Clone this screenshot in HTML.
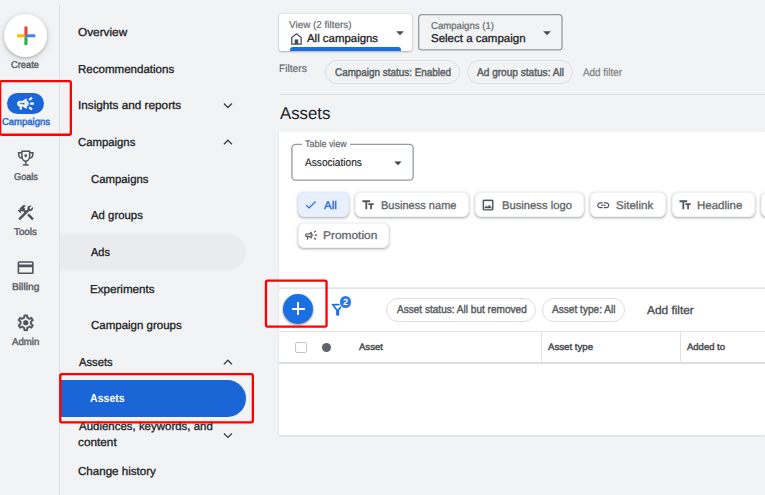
<!DOCTYPE html>
<html>
<head>
<meta charset="utf-8">
<style>
*{box-sizing:border-box;margin:0;padding:0}
html,body{width:765px;height:495px;overflow:hidden;background:#f1f3f4;font-family:"Liberation Sans",sans-serif;color:#202124}
#root{position:relative;width:765px;height:495px;overflow:hidden;background:#f1f3f4}
.a{position:absolute}
.t{position:absolute;white-space:nowrap;line-height:1;text-rendering:geometricPrecision;transform-origin:0 0}
.chip{position:absolute;border:1px solid #dcdee1;border-radius:12px}
.achip{position:absolute;border:1px solid #f2f3f5;border-radius:6px;background:#fff;box-shadow:0 1px 2px rgba(60,64,67,.30),0 1px 3px .5px rgba(60,64,67,.13)}
.red{position:absolute;border:2.2px solid #f2101a;border-radius:2.5px}
svg{position:absolute;overflow:visible}
</style>
</head>
<body>
<div id="root">

<!-- left rail divider -->
<div class="a" style="left:59px;top:5px;width:1px;height:490px;background:#dcdee1"></div>

<!-- Create button -->
<div class="a" style="left:4.2px;top:14.3px;width:42.8px;height:42.5px;border-radius:50%;background:#fff;box-shadow:0 1px 3px rgba(60,64,67,.30),0 2px 6px 1px rgba(60,64,67,.13)"></div>
<svg style="left:15.8px;top:25.8px" width="20" height="20" viewBox="0 0 20 20">
<rect x="8.4" y="0.5" width="3.1" height="10.8" fill="#ea4335"/>
<rect x="8.4" y="11.3" width="3.1" height="7.7" fill="#34a853"/>
<rect x="1" y="8.2" width="7.4" height="3.1" fill="#fbbc04"/>
<path d="M11.5 8.200H19.400V11.300H8.400Z" fill="#4285f4"/>
</svg>

<!-- Campaigns pill + icon -->
<div class="a" style="left:7.2px;top:92.9px;width:37px;height:21.1px;border-radius:11px;background:#1a66d6"></div>
<svg style="left:16.3px;top:93.5px" width="19.2" height="19.2" viewBox="0 0 24 24" fill="#fff" stroke="#fff" stroke-width=".85"><path d="M18 11v2h4v-2h-4zm-2 6.61c.96.71 2.21 1.65 3.2 2.39.4-.53.8-1.07 1.2-1.6-.99-.74-2.24-1.68-3.2-2.4-.4.54-.8 1.08-1.2 1.61zM20.4 5.6c-.4-.53-.8-1.07-1.2-1.6-.99.74-2.24 1.68-3.2 2.4.4.53.8 1.07 1.2 1.6.96-.72 2.21-1.65 3.2-2.4zM4 9c-1.1 0-2 .9-2 2v2c0 1.1.9 2 2 2h1v4h2v-4h1l5 3V6L8 9H4zm5.03 1.71L11 9.53v4.94l-1.97-1.18-.48-.29H4v-2h4.55l.48-.29zM15.5 12c0-1.33-.58-2.53-1.5-3.35v6.69c.92-.81 1.5-2.01 1.5-3.34z"/></svg>

<!-- Goals trophy -->
<svg style="left:0;top:0" width="765" height="495" fill="none" stroke="#4e5257" stroke-width="1.45">
<path d="M21.85 151.3H29.65V155.6C29.65 158.9 27.9 161.2 25.75 161.2C23.6 161.2 21.85 158.9 21.85 155.6Z"/>
<path d="M21.8 152.7H18.6V153.9C18.6 156.2 20 157.8 22.3 158.2"/>
<path d="M29.7 152.7H32.9V153.9C32.9 156.2 31.5 157.8 29.2 158.2"/>
<path d="M25.75 161.2V164.6"/>
<path d="M22.9 164.95H28.6" stroke-width="1.5"/>
<circle cx="25.75" cy="155.7" r="1.35" fill="#4e5257" stroke="none"/>
</svg>

<!-- Tools -->
<svg style="left:15.7px;top:203px" width="19.5" height="19.5" viewBox="0 0 24 24" fill="#50545a"><rect height="8.48" transform="matrix(0.7071 -0.7071 0.7071 0.7071 -6.8717 17.6255)" width="3" x="16.34" y="12.87"/><path d="M17.5,10c1.930,0,3.500-1.570,3.500-3.500c0-0.580-0.160-1.120-0.410-1.600l-2.700,2.700L16.400,6.110l2.700-2.700C18.620,3.160,18.080,3,17.500,3 C15.570,3,14,4.570,14,6.500c0,0.410,0.080,0.800,0.210,1.160l-1.850,1.850l-1.780-1.780l0.710-0.710L9.880,5.610L12,3.490 c-1.170-1.170-3.070-1.170-4.240,0L4.220,7.030l1.410,1.410H2.810L2.100,9.150l3.540,3.540l0.710-0.710V9.150l1.410,1.410l0.710-0.710l1.780,1.780 l-7.410,7.410l2.120,2.120L16.340,9.790C16.700,9.920,17.090,10,17.500,10z"/></svg>

<!-- Billing card -->
<svg style="left:16.2px;top:258.3px" width="19.3" height="19.3" viewBox="0 0 24 24" fill="#50545a"><path d="M20 4H4c-1.110 0-1.990.89-1.990 2L2 18c0 1.110.89 2 2 2h16c1.110 0 2-.89 2-2V6c0-1.110-.89-2-2-2zm0 14H4v-6.500h16v6.500zm0-10H4V6h16v2z"/></svg>

<!-- Admin gear -->
<svg style="left:16.1px;top:313.1px" width="19.5" height="19.5" viewBox="0 0 24 24" fill="#50545a" stroke="#50545a" stroke-width=".35"><path d="M19.430 12.980c.04-.32.07-.64.07-.98 0-.34-.03-.66-.07-.98l2.110-1.650c.19-.15.24-.42.12-.64l-2-3.460c-.09-.16-.26-.25-.44-.25-.06 0-.12.010-.17.030l-2.490 1c-.52-.4-1.080-.73-1.690-.98l-.38-2.650C14.460 2.180 14.250 2 14 2h-4c-.25 0-.46.18-.49.42l-.38 2.650c-.61.25-1.170.59-1.690.98l-2.490-1c-.06-.02-.12-.03-.18-.03-.17 0-.34.09-.43.25l-2 3.460c-.13.22-.07.49.12.64l2.110 1.650c-.04.32-.07.65-.07.98 0 .33.03.66.07.98l-2.110 1.650c-.19.15-.24.42-.12.640l2 3.460c.09.16.26.25.44.25.06 0 .12-.010.17-.03l2.490-1c.52.4 1.080.73 1.690.98l.38 2.650c.03.24.24.42.49.42h4c.25 0 .46-.18.49-.42l.38-2.650c.61-.25 1.170-.59 1.690-.98l2.490 1c.06.02.12.03.18.03.17 0 .34-.09.43-.25l2-3.460c.12-.22.07-.49-.12-.64l-2.110-1.650zm-1.980-1.710c.04.31.05.52.05.73 0 .21-.02.43-.05.73l-.14 1.130.89.7 1.080.84-.7 1.210-1.270-.51-1.040-.42-.9.68c-.43.32-.84.56-1.250.73l-1.060.43-.16 1.130-.2 1.350h-1.400l-.19-1.350-.16-1.130-1.060-.43c-.43-.18-.83-.41-1.230-.71l-.91-.7-1.060.43-1.270.51-.7-1.210 1.080-.84.89-.7-.14-1.130c-.03-.31-.05-.54-.05-.74s.02-.43.05-.73l.14-1.130-.89-.7-1.080-.84.7-1.210 1.270.51 1.040.42.9-.68c.43-.32.84-.56 1.250-.73l1.060-.43.16-1.130.2-1.350h1.390l.19 1.350.16 1.130 1.060.43c.43.18.83.41 1.230.71l.91.7 1.060-.43 1.270-.51.7 1.210-1.070.85-.89.7.14 1.130z"/><circle cx="12" cy="12" r="3.1"/></svg>

<!-- nav highlight backgrounds -->
<div class="a" style="left:60px;top:233.5px;width:185.8px;height:36.7px;border-radius:0 18.4px 18.4px 0;background:#e9ebee"></div>
<div class="a" style="left:60px;top:380.2px;width:186px;height:36.8px;border-radius:0 18.4px 18.4px 0;background:#1a66d6"></div>

<!-- nav chevrons -->
<svg style="left:0;top:0" width="765" height="495" fill="none" stroke="#3c4043" stroke-width="1.35">
<polyline points="223.9,103.5 227.9,107.5 231.9,103.5"/>
<polyline points="223.9,144.2 227.9,140.2 231.9,144.2"/>
<polyline points="223.9,364.2 227.9,360.2 231.9,364.2"/>
<polyline points="223.9,433.4 227.9,437.4 231.9,433.4"/>
</svg>

<!-- top selector 1 -->
<div class="a" style="left:279.4px;top:13.8px;width:133px;height:36.8px;border-radius:3px;background:#fff;box-shadow:0 1px 2px rgba(60,64,67,.32),0 0 2px rgba(60,64,67,.22)"></div>
<div class="a" style="left:290.3px;top:47.2px;width:111.2px;height:3.4px;border-radius:3px 3px 0 0;background:#1a6ee0"></div>
<svg style="left:0;top:0" width="765" height="495"><path d="M291.75 44.05V37.55L296.45 33.75L301.15 37.55V44.05Z" fill="none" stroke="#494d52" stroke-width="1.25" stroke-linejoin="miter"/><rect x="294.7" y="39.4" width="3.5" height="4.6" fill="#494d52"/></svg>
<svg style="left:392.1px;top:24.6px" width="16" height="16" viewBox="0 0 24 24" fill="#4a4e53"><path d="M6.200 9.500l5.800 6 5.800-6z"/></svg>

<!-- top selector 2 -->

<svg style="left:538.5px;top:24.6px" width="16" height="16" viewBox="0 0 24 24" fill="#4a4e53"><path d="M6.200 9.500l5.800 6 5.800-6z"/></svg>

<!-- filter chips -->
<div class="chip" style="left:325.4px;top:60.4px;width:134.8px;height:23.7px"></div>
<div class="chip" style="left:466.9px;top:60.4px;width:106.6px;height:23.7px"></div>
<div class="a" style="left:280px;top:93.9px;width:485px;height:1px;background:#dcdee1"></div>

<!-- white card -->
<div class="a" style="left:279.4px;top:131.8px;width:486px;height:303.5px;background:#fff;box-shadow:0 1px 2px rgba(60,64,67,.15)"></div>

<!-- Table view -->
<svg style="left:0;top:0" width="765" height="495"><rect x="418.65" y="14.65" width="143.4" height="35.3" rx="3.2" fill="none" stroke="#959ba1" stroke-width="1.3"/><rect x="291.95" y="144.45" width="121.2" height="35.7" rx="3.6" fill="none" stroke="#959ba1" stroke-width="1.3"/></svg>
<div class="a" style="left:302.2px;top:143px;width:48px;height:3.5px;background:#fff"></div>
<svg style="left:390.1px;top:154.8px" width="16" height="16" viewBox="0 0 24 24" fill="#3c4043"><path d="M6.600 9.600l5.400 5.600 5.400-5.600z"/></svg>

<!-- asset chips -->
<div class="achip" style="left:297.6px;top:192.3px;width:51.6px;height:24.8px;background:#e8f0fe;border-color:#e3ecfd"></div>
<svg style="left:304.2px;top:198.1px" width="13.6" height="13.6" viewBox="0 0 24 24" fill="#1a6ee0" stroke="#1a6ee0" stroke-width=".3"><path d="M9 16.170L4.830 12l-1.420 1.410L9 19 21 7l-1.410-1.410z"/></svg>

<div class="achip" style="left:354.7px;top:192.3px;width:114.6px;height:24.8px"></div>
<svg style="left:360.9px;top:198px" width="14.2" height="14.2" viewBox="0 0 24 24" fill="#50545a"><path d="M2.500 4v3h5v12h3V7h5V4h-13zm19 5h-9v3h3v7h3v-7h3V9z"/></svg>

<div class="achip" style="left:474.9px;top:192.3px;width:109.2px;height:24.8px"></div>
<svg style="left:481.3px;top:197.8px" width="14.1" height="14.1" viewBox="0 0 24 24" fill="#50545a" stroke="#50545a" stroke-width=".5"><path d="M19 5v14H5V5h14m0-2H5c-1.100 0-2 .9-2 2v14c0 1.100.9 2 2 2h14c1.100 0 2-.9 2-2V5c0-1.100-.9-2-2-2zm-4.860 8.860l-3 3.870L9 13.140 6 17h12l-3.860-5.140z"/></svg>

<div class="achip" style="left:589.6px;top:192.3px;width:76.3px;height:24.8px"></div>
<svg style="left:595.8px;top:197.6px" width="14.5" height="14.5" viewBox="0 0 24 24" fill="#50545a"><path d="M3.900 12c0-1.710 1.390-3.100 3.100-3.100h4V7H7c-2.760 0-5 2.240-5 5s2.240 5 5 5h4v-1.900H7c-1.710 0-3.100-1.390-3.100-3.100zM8 13h8v-2H8v2zm9-6h-4v1.900h4c1.710 0 3.100 1.390 3.100 3.100s-1.390 3.100-3.100 3.100h-4V17h4c2.760 0 5-2.240 5-5s-2.240-5-5-5z"/></svg>

<div class="achip" style="left:671.5px;top:192.3px;width:83.5px;height:24.8px"></div>
<svg style="left:677.8px;top:198px" width="14.2" height="14.2" viewBox="0 0 24 24" fill="#50545a"><path d="M2.500 4v3h5v12h3V7h5V4h-13zm19 5h-9v3h3v7h3v-7h3V9z"/></svg>

<div class="achip" style="left:760.9px;top:192.3px;width:40px;height:24.8px"></div>

<div class="achip" style="left:297.6px;top:223px;width:91.6px;height:24.8px"></div>
<svg style="left:303.7px;top:228.3px" width="14.4" height="14.4" viewBox="0 0 24 24" fill="#50545a"><path d="M18 11v2h4v-2h-4zm-2 6.610c.96.71 2.210 1.650 3.200 2.390.4-.53.8-1.070 1.200-1.600-.99-.74-2.240-1.680-3.200-2.400-.4.54-.8 1.080-1.200 1.610zM20.400 5.600c-.4-.53-.8-1.070-1.200-1.600-.99.74-2.240 1.680-3.200 2.400.4.53.8 1.070 1.200 1.600.96-.72 2.210-1.650 3.200-2.400zM4 9c-1.100 0-2 .9-2 2v2c0 1.100.9 2 2 2h1v4h2v-4h1l5 3V6L8 9H4zm5.030 1.710L11 9.530v4.940l-1.970-1.180-.48-.29H4v-2h4.550l.48-.29zM15.500 12c0-1.330-.58-2.530-1.500-3.350v6.690c.92-.81 1.500-2.010 1.500-3.340z"/></svg>

<!-- toolbar lines -->
<div class="a" style="left:279.4px;top:287px;width:486px;height:2px;background:linear-gradient(#eceef0,#dee0e4)"></div>
<div class="a" style="left:279.4px;top:331px;width:486px;height:1px;background:#e0e2e5"></div>
<div class="a" style="left:279.4px;top:362.3px;width:486px;height:1.6px;background:#dcdee2"></div>
<div class="a" style="left:541px;top:332px;width:1px;height:30.5px;background:#e0e2e5"></div>
<div class="a" style="left:680.2px;top:332px;width:1px;height:30.5px;background:#e0e2e5"></div>

<!-- plus FAB -->
<div class="a" style="left:282.7px;top:293.6px;width:30.5px;height:30.5px;border-radius:50%;background:#1a6fe3;box-shadow:0 1px 3px rgba(60,64,67,.40),0 1px 2px rgba(60,64,67,.25)"></div>
<div class="a" style="left:291.5px;top:307.9px;width:13px;height:1.8px;background:#fff"></div>
<div class="a" style="left:297.1px;top:302.3px;width:1.8px;height:13px;background:#fff"></div>

<!-- filter funnel + badge -->
<svg style="left:328.9px;top:301.3px" width="17.3" height="17.3" viewBox="0 0 24 24" fill="#1a6ee0" stroke="#1a6ee0" stroke-width=".4"><path d="M7 6h10l-5.010 6.300L7 6zm-2.750-.39C6.270 8.200 10 13 10 13v6c0 .55.45 1 1 1h2c.55 0 1-.45 1-1v-6s3.720-4.800 5.740-7.390c.51-.66.04-1.610-.79-1.610H5.040c-.83 0-1.300.95-.79 1.610z"/></svg>
<div class="a" style="left:339px;top:295.5px;width:13px;height:13px;border-radius:50%;background:#fff"></div>
<div class="a" style="left:339.7px;top:296.2px;width:11.6px;height:11.6px;border-radius:50%;background:#2a79e6"></div>
<div class="t" style="left:339.7px;top:297.5px;width:11.6px;text-align:center;font-size:9px;font-weight:bold;color:#fff">2</div>

<!-- toolbar chips -->
<div class="chip" style="left:386.3px;top:298px;width:150px;height:23.6px;background:#fff"></div>
<div class="chip" style="left:542.3px;top:298px;width:82.9px;height:23.6px;background:#fff"></div>

<!-- header checkbox + dot -->
<div class="a" style="left:295.4px;top:342.1px;width:11.4px;height:11.2px;border:1.5px solid #c3c6cb;border-radius:2px;background:#fff"></div>
<div class="a" style="left:322px;top:343.1px;width:9.3px;height:9.3px;border-radius:50%;background:#5f6368"></div>

<div class="t" style="left:11.45px;top:61px;font-size:9.9px;color:#5f6368;transform:scaleX(0.9459);-webkit-text-stroke:.45px currentColor;">Create</div>
<div class="t" style="left:1.65px;top:118px;font-size:9.9px;color:#2467d0;transform:scaleX(0.9599);-webkit-text-stroke:.45px currentColor;">Campaigns</div>
<div class="t" style="left:13.71px;top:173px;font-size:9.9px;color:#5f6368;transform:scaleX(0.9277);-webkit-text-stroke:.45px currentColor;">Goals</div>
<div class="t" style="left:14.23px;top:228px;font-size:9.9px;color:#5f6368;transform:scaleX(0.9906);-webkit-text-stroke:.45px currentColor;">Tools</div>
<div class="t" style="left:11.89px;top:283px;font-size:9.9px;color:#5f6368;transform:scaleX(1.0377);-webkit-text-stroke:.45px currentColor;">Billing</div>
<div class="t" style="left:12.12px;top:338px;font-size:9.9px;color:#5f6368;transform:scaleX(0.9743);-webkit-text-stroke:.45px currentColor;">Admin</div>
<div class="t" style="left:78.24px;top:28px;font-size:11.5px;color:#202124;transform:scaleX(1.0259);-webkit-text-stroke:.3px currentColor;">Overview</div>
<div class="t" style="left:77.85px;top:65px;font-size:11.5px;color:#202124;transform:scaleX(1.0034);-webkit-text-stroke:.3px currentColor;">Recommendations</div>
<div class="t" style="left:78.08px;top:101px;font-size:11.5px;color:#202124;transform:scaleX(1.0216);-webkit-text-stroke:.3px currentColor;">Insights and reports</div>
<div class="t" style="left:78.21px;top:138px;font-size:11.5px;color:#202124;transform:scaleX(0.9857);-webkit-text-stroke:.3px currentColor;">Campaigns</div>
<div class="t" style="left:90.51px;top:175px;font-size:11.5px;color:#202124;transform:scaleX(0.9874);-webkit-text-stroke:.3px currentColor;">Campaigns</div>
<div class="t" style="left:91.05px;top:211px;font-size:11.5px;color:#202124;transform:scaleX(0.9899);-webkit-text-stroke:.3px currentColor;">Ad groups</div>
<div class="t" style="left:91.05px;top:248px;font-size:11.5px;color:#202124;transform:scaleX(0.9528);-webkit-text-stroke:.3px currentColor;">Ads</div>
<div class="t" style="left:90.14px;top:285px;font-size:11.5px;color:#202124;transform:scaleX(1.0094);-webkit-text-stroke:.3px currentColor;">Experiments</div>
<div class="t" style="left:90.50px;top:321px;font-size:11.5px;color:#202124;transform:scaleX(0.9997);-webkit-text-stroke:.3px currentColor;">Campaign groups</div>
<div class="t" style="left:78.75px;top:358px;font-size:11.5px;color:#202124;transform:scaleX(0.9762);-webkit-text-stroke:.3px currentColor;">Assets</div>
<div class="t" style="left:90.47px;top:394px;font-size:11.5px;color:#ffffff;transform:scaleX(0.9211);font-weight:bold;">Assets</div>
<div class="t" style="left:78.75px;top:422px;font-size:11.5px;color:#202124;transform:scaleX(0.9966);-webkit-text-stroke:.3px currentColor;">Audiences, keywords, and</div>
<div class="t" style="left:78.29px;top:438px;font-size:11.5px;color:#202124;transform:scaleX(1.0261);-webkit-text-stroke:.3px currentColor;">content</div>
<div class="t" style="left:78.20px;top:467px;font-size:11.5px;color:#202124;transform:scaleX(1.0065);-webkit-text-stroke:.3px currentColor;">Change history</div>
<div class="t" style="left:288.90px;top:21px;font-size:10px;color:#676b70;transform:scaleX(0.9907);-webkit-text-stroke:.2px currentColor;">View (2 filters)</div>
<div class="t" style="left:307.35px;top:34px;font-size:11.3px;color:#202124;transform:scaleX(1.0108);-webkit-text-stroke:.3px currentColor;">All campaigns</div>
<div class="t" style="left:430.82px;top:22px;font-size:10px;color:#676b70;transform:scaleX(0.9597);-webkit-text-stroke:.2px currentColor;">Campaigns (1)</div>
<div class="t" style="left:430.54px;top:34px;font-size:11.3px;color:#202124;transform:scaleX(1.0176);-webkit-text-stroke:.3px currentColor;">Select a campaign</div>
<div class="t" style="left:279.10px;top:64px;font-size:10.8px;color:#676b70;transform:scaleX(0.9433);-webkit-text-stroke:.2px currentColor;">Filters</div>
<div class="t" style="left:334.53px;top:68px;font-size:11.2px;color:#585c61;transform:scaleX(0.8833);-webkit-text-stroke:.44px currentColor;">Campaign status: Enabled</div>
<div class="t" style="left:476.72px;top:68px;font-size:11.2px;color:#585c61;transform:scaleX(0.9018);-webkit-text-stroke:.44px currentColor;">Ad group status: All</div>
<div class="t" style="left:583.00px;top:68px;font-size:11px;color:#7b8085;transform:scaleX(0.8995);-webkit-text-stroke:.2px currentColor;">Add filter</div>
<div class="t" style="left:280.00px;top:105px;font-size:17.2px;color:#202124;transform:scaleX(0.9769);">Assets</div>
<div class="t" style="left:305.21px;top:140px;font-size:9.6px;color:#676b70;transform:scaleX(0.9331);-webkit-text-stroke:.2px currentColor;">Table view</div>
<div class="t" style="left:304.76px;top:158px;font-size:11px;color:#202124;transform:scaleX(0.9215);-webkit-text-stroke:.12px currentColor;">Associations</div>
<div class="t" style="left:324.25px;top:201px;font-size:11.2px;color:#1a66d9;transform:scaleX(1.0334);-webkit-text-stroke:.3px currentColor;">All</div>
<div class="t" style="left:381.25px;top:201px;font-size:11.2px;color:#5f6368;transform:scaleX(0.9870);-webkit-text-stroke:.28px currentColor;">Business name</div>
<div class="t" style="left:501.54px;top:201px;font-size:11.2px;color:#5f6368;transform:scaleX(1.0032);-webkit-text-stroke:.28px currentColor;">Business logo</div>
<div class="t" style="left:615.73px;top:201px;font-size:11.2px;color:#5f6368;transform:scaleX(1.0299);-webkit-text-stroke:.28px currentColor;">Sitelink</div>
<div class="t" style="left:697.32px;top:201px;font-size:11.2px;color:#5f6368;transform:scaleX(1.0278);-webkit-text-stroke:.28px currentColor;">Headline</div>
<div class="t" style="left:323.28px;top:231px;font-size:11.2px;color:#5f6368;transform:scaleX(1.0658);-webkit-text-stroke:.28px currentColor;">Promotion</div>
<div class="t" style="left:396.52px;top:305px;font-size:11.2px;color:#585c61;transform:scaleX(0.8992);-webkit-text-stroke:.44px currentColor;">Asset status: All but removed</div>
<div class="t" style="left:552.32px;top:305px;font-size:11.2px;color:#585c61;transform:scaleX(0.9031);-webkit-text-stroke:.44px currentColor;">Asset type: All</div>
<div class="t" style="left:647.14px;top:306px;font-size:11.5px;color:#43474c;transform:scaleX(1.0314);-webkit-text-stroke:.28px currentColor;">Add filter</div>
<div class="t" style="left:359.03px;top:342px;font-size:9.4px;color:#4a4e53;transform:scaleX(1.0172);-webkit-text-stroke:.45px currentColor;">Asset</div>
<div class="t" style="left:548.12px;top:342px;font-size:9.4px;color:#4a4e53;transform:scaleX(1.0308);-webkit-text-stroke:.45px currentColor;">Asset type</div>
<div class="t" style="left:687.12px;top:342px;font-size:9.4px;color:#4a4e53;transform:scaleX(1.0133);-webkit-text-stroke:.45px currentColor;">Added to</div>

<!-- red annotation boxes -->
<svg style="left:0;top:0" width="765" height="495" fill="none" stroke="#ff0000" stroke-width="2.3">
<rect x="0.15" y="81.05" width="70.7" height="53.7" rx="1.6"/>
<rect x="60.25" y="374.05" width="192.6" height="48.4" rx="1.6"/>
<rect x="265.95" y="280.55" width="60.6" height="46" rx="1.6"/>
</svg>

</div>
</body>
</html>
